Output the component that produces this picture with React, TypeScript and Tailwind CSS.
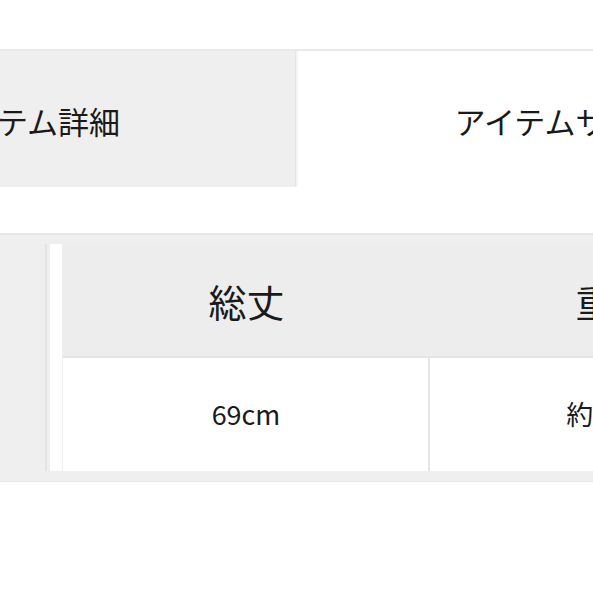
const tabs = [
  { label: 'アイテム詳細', active: false },
  { label: 'アイテムサイズ', active: true },
];

const sizes = [
  { name: '総丈', value: '69cm' },
  { name: '重量', value: '約1.2kg' },
];

export default function App() {
  return (
    <div
      className="w-[593px] h-[593px] overflow-hidden bg-white text-[#1a1a1a]"
      style={{ fontFamily: '"Noto Sans CJK JP", "Noto Sans", sans-serif' }}
    >
      <div className="pt-[49px]">
        <div className="flex ml-[-238px] w-max border-t-2 border-[#e9e9e9]">
          {tabs.map((tab) => (
            <div
              key={tab.label}
              className={
                tab.active
                  ? 'w-[528px] h-[136px] flex items-center justify-center bg-white border-l-2 border-[#f4f4f4] text-[31px] pt-[4px]'
                  : 'w-[534px] h-[136px] flex items-center justify-center bg-[#efefef] border-r border-[#e4e4e4] text-[31px] pt-[4px]'
              }
            >
              {tab.label}
            </div>
          ))}
        </div>
      </div>

      <div className="mt-[46px] bg-[#efefef] border-t-2 border-[#e6e6e6] pt-[9px] pb-[10px] border-b border-b-[#e8e8e8]">
        <div className="flex">
          <div className="w-[47px] shrink-0 border-r-2 border-[#e4e4e4]" />
          <div className="w-[12px] shrink-0 ml-[3px] bg-white" />
          <div className="flex-1 min-w-0 flex flex-col ml-[1px]">
            <div className="flex h-[114px] bg-[#ededed] border-b-2 border-[#e5e5e5]">
              {sizes.map((s) => (
                <div
                  key={s.name}
                  className="w-[367px] shrink-0 flex items-center justify-center text-[38px]"
                >
                  {s.name}
                </div>
              ))}
            </div>
            <div className="flex h-[113px] bg-white">
              {sizes.map((s, i) => (
                <div
                  key={s.name}
                  className={
                    i === 0
                      ? 'w-[367px] shrink-0 flex items-center justify-center text-[27px] border-r-2 border-[#e6e6e6] pl-[1px]'
                      : 'w-[367px] shrink-0 flex items-center justify-center text-[27px]'
                  }
                >
                  {s.value}
                </div>
              ))}
            </div>
          </div>
        </div>
      </div>
    </div>
  );
}
